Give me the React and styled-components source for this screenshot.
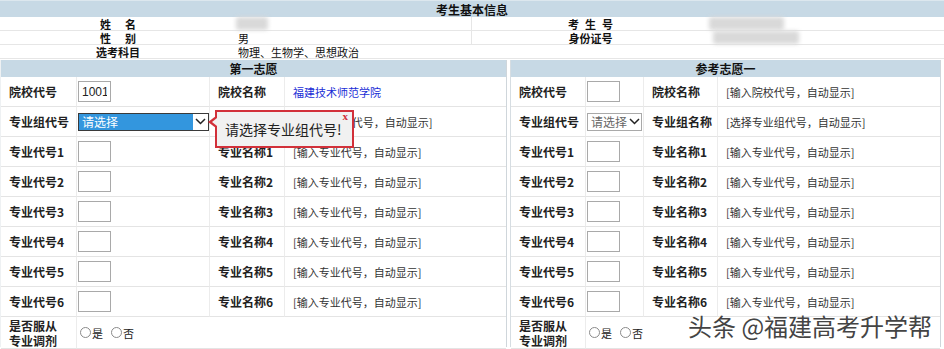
import React from "react";
import styled, { createGlobalStyle } from "styled-components";

const GlobalStyle = createGlobalStyle`
  body {
    margin: 0;
    background: #ffffff;
    font-family: "Noto Sans CJK SC", "Liberation Sans", sans-serif;
    font-size: 12px;
    color: #222;
  }
`;

const Page = styled.div`
  position: relative;
  width: 944px;
  height: 349px;
  overflow: hidden;
  background: #fff;
`;

const TitleBar = styled.div`
  height: 17px;
  line-height: 17px;
  background: #c7d9e5;
  border-top: 1px solid #dce7ee;
  box-sizing: border-box;
  text-align: center;
  font-weight: bold;
  font-size: 12px;
  color: #111;
`;

const InfoGrid = styled.div`
  display: grid;
  grid-template-columns: 236px 235px 238px 1fr;
  grid-auto-rows: 14px;
  margin-bottom: 1px;
`;

const InfoCell = styled.div`
  display: flex;
  align-items: center;
  justify-content: ${(p) => (p.$label ? "center" : "flex-start")};
  padding-left: ${(p) => (p.$label ? p.$spread || "0" : `${p.$pad ?? 2}px`)};
  font-weight: ${(p) => (p.$label ? "bold" : "normal")};
  letter-spacing: ${(p) => p.$spread || "0"};
  font-size: 11px;
  line-height: 14px;
  border-bottom: 1px solid #e6e6e6;
  border-left: ${(p) => (p.$divider ? "1px solid #e6e6e6" : "none")};
  grid-column: ${(p) => p.$span || "auto"};
  box-sizing: border-box;
  color: #111;
  white-space: nowrap;
`;

const Blur = styled.span`
  display: inline-block;
  width: ${(p) => p.$w}px;
  height: 13px;
  background: #d9d9d9;
  filter: blur(2px);
  border-radius: 2px;
`;

const Panels = styled.div`
  display: flex;
  gap: 3px;
  padding-right: 3px;
`;

const Panel = styled.div`
  width: ${(p) => p.$w}px;
  border-left: 1px solid ${(p) => (p.$edge ? "#d6dde2" : "#eef1f3")};
  border-right: 1px solid #cfd6db;
  box-sizing: border-box;
`;

const PanelHead = styled.div`
  height: 17px;
  line-height: 17px;
  background: #c7d9e5;
  text-align: center;
  font-weight: bold;
  font-size: 12px;
  color: #111;
`;

const Grid = styled.div`
  display: grid;
  grid-template-columns: ${(p) => p.$cols};
  grid-auto-rows: 30px;
`;

const Cell = styled.div`
  display: flex;
  align-items: center;
  padding-left: ${(p) => p.$pad ?? 8}px;
  border-bottom: 1px solid #e4e4e4;
  border-right: ${(p) => (p.$last ? "none" : "1px solid #ececec")};
  box-sizing: border-box;
  grid-column: ${(p) => p.$span || "auto"};
  min-height: ${(p) => (p.$tall ? "32px" : "0")};
  white-space: nowrap;
`;

const Label = styled.span`
  font-weight: bold;
  font-size: 12px;
  line-height: 15px;
  color: #222;
`;

const Hint = styled.span`
  font-size: 11px;
  color: #333;
`;

const SchoolLink = styled.span`
  font-size: 11px;
  color: #1a2ed6;
`;

const CodeBox = styled.input`
  width: 33px;
  height: 21px;
  box-sizing: border-box;
  border: 1px solid #a9a9a9;
  padding: 0 3px;
  font-family: "Liberation Sans", sans-serif;
  font-size: 12px;
  color: #222;
  background: #fff;
  outline: none;
`;

const SelectBox = styled.div`
  display: flex;
  align-items: center;
  width: ${(p) => p.$w}px;
  height: 18px;
  box-sizing: border-box;
  border: 1px solid ${(p) => (p.$active ? "#3a3a3a" : "#a9a9a9")};
  background: #fff;
`;

const SelectText = styled.span`
  flex: 1;
  height: 100%;
  display: flex;
  align-items: center;
  padding-left: 3px;
  font-size: 12px;
  background: ${(p) => (p.$active ? "#3396de" : "transparent")};
  color: ${(p) => (p.$active ? "#fff" : "#666")};
`;

const Chevron = styled.span`
  width: 15px;
  display: flex;
  align-items: center;
  justify-content: center;
`;

const Radios = styled.div`
  display: flex;
  gap: 8px;
  font-size: 11px;
  color: #222;
`;

const Radio = styled.span`
  display: flex;
  align-items: center;
  gap: 1px;
  &::before {
    content: "";
    width: 11px;
    height: 11px;
    border: 1px solid #8a8a8a;
    border-radius: 50%;
    box-sizing: border-box;
  }
`;

const Tip = styled.div`
  position: absolute;
  left: 215px;
  top: 110px;
  width: 139px;
  height: 38px;
  box-sizing: border-box;
  border: 2px solid #d2303a;
  background: #f1f1f1;
  padding-left: 8px;
  display: flex;
  align-items: center;
  font-size: 14px;
  color: #222;
  &::before {
    content: "";
    position: absolute;
    left: -9px;
    top: 4px;
    border-top: 6px solid transparent;
    border-bottom: 6px solid transparent;
    border-right: 8px solid #d2303a;
  }
  &::after {
    content: "";
    position: absolute;
    left: -5px;
    top: 6px;
    border-top: 4px solid transparent;
    border-bottom: 4px solid transparent;
    border-right: 5px solid #f1f1f1;
  }
`;

const TipClose = styled.span`
  position: absolute;
  right: 4px;
  top: -2px;
  font-family: "Liberation Serif", serif;
  font-weight: bold;
  font-size: 11px;
  color: #d2303a;
`;

const Watermark = styled.div`
  position: absolute;
  left: 688px;
  top: 311px;
  font-size: 24px;
  line-height: 30px;
  color: #444;
  text-shadow: 0 0 2px #fff, 0 0 2px #fff;
  white-space: nowrap;
`;

function ChevronIcon() {
  return (
    <svg width="11" height="7" viewBox="0 0 11 7">
      <path d="M1 1 L5.5 5.5 L10 1" fill="none" stroke="#222" strokeWidth="1.5" />
    </svg>
  );
}

function Choice({ active, w }) {
  return (
    <SelectBox $w={w} $active={active}>
      <SelectText $active={active}>请选择</SelectText>
      <Chevron>
        <ChevronIcon />
      </Chevron>
    </SelectBox>
  );
}

const majorRows = [1, 2, 3, 4, 5, 6];

function WishPanel({ title, cols, width, selectW, activeSelect, school, schoolCode, edge }) {
  return (
    <Panel $w={width} $edge={edge}>
      <PanelHead>{title}</PanelHead>
      <Grid $cols={cols}>
        <Cell><Label>院校代号</Label></Cell>
        <Cell $pad={1}><CodeBox defaultValue={schoolCode} /></Cell>
        <Cell><Label>院校名称</Label></Cell>
        <Cell $last>{school ? <SchoolLink>{school}</SchoolLink> : <Hint>[输入院校代号，自动显示]</Hint>}</Cell>

        <Cell><Label>专业组代号</Label></Cell>
        <Cell $pad={1}><Choice w={selectW} active={activeSelect} /></Cell>
        <Cell><Label>专业组名称</Label></Cell>
        <Cell $last><Hint>[选择专业组代号，自动显示]</Hint></Cell>

        {majorRows.map((n) => (
          <React.Fragment key={n}>
            <Cell><Label>专业代号{n}</Label></Cell>
            <Cell $pad={1}><CodeBox /></Cell>
            <Cell><Label>专业名称{n}</Label></Cell>
            <Cell $last><Hint>[输入专业代号，自动显示]</Hint></Cell>
          </React.Fragment>
        ))}

        <Cell $tall><Label>是否服从<br />专业调剂</Label></Cell>
        <Cell $span="2 / 5" $last $tall $pad={3}>
          <Radios>
            <Radio>是</Radio>
            <Radio>否</Radio>
          </Radios>
        </Cell>
      </Grid>
    </Panel>
  );
}

export default function App() {
  return (
    <Page>
      <GlobalStyle />
      <TitleBar>考生基本信息</TitleBar>
      <InfoGrid>
        <InfoCell $label $spread="14px">姓名</InfoCell>
        <InfoCell $pad={-4}><Blur $w={32} /></InfoCell>
        <InfoCell $label $divider $spread="6px">考生号</InfoCell>
        <InfoCell $pad={0}><Blur $w={75} /></InfoCell>

        <InfoCell $label $spread="14px">性别</InfoCell>
        <InfoCell>男</InfoCell>
        <InfoCell $label $divider>身份证号</InfoCell>
        <InfoCell $pad={4}><Blur $w={86} /></InfoCell>

        <InfoCell $label>选考科目</InfoCell>
        <InfoCell $span="2 / 5">物理、生物学、思想政治</InfoCell>
      </InfoGrid>
      <Panels>
        <WishPanel
          title="第一志愿"
          width={507}
          cols="76px 133px 75px 1fr"
          selectW={131}
          activeSelect
          school="福建技术师范学院"
          schoolCode="1001"
        />
        <WishPanel
          title="参考志愿一"
          width={431}
          cols="75px 58px 74px 1fr"
          selectW={55}
          edge
        />
      </Panels>
      <Tip>
        请选择专业组代号!
        <TipClose>x</TipClose>
      </Tip>
      <Watermark>头条 @福建高考升学帮</Watermark>
    </Page>
  );
}
